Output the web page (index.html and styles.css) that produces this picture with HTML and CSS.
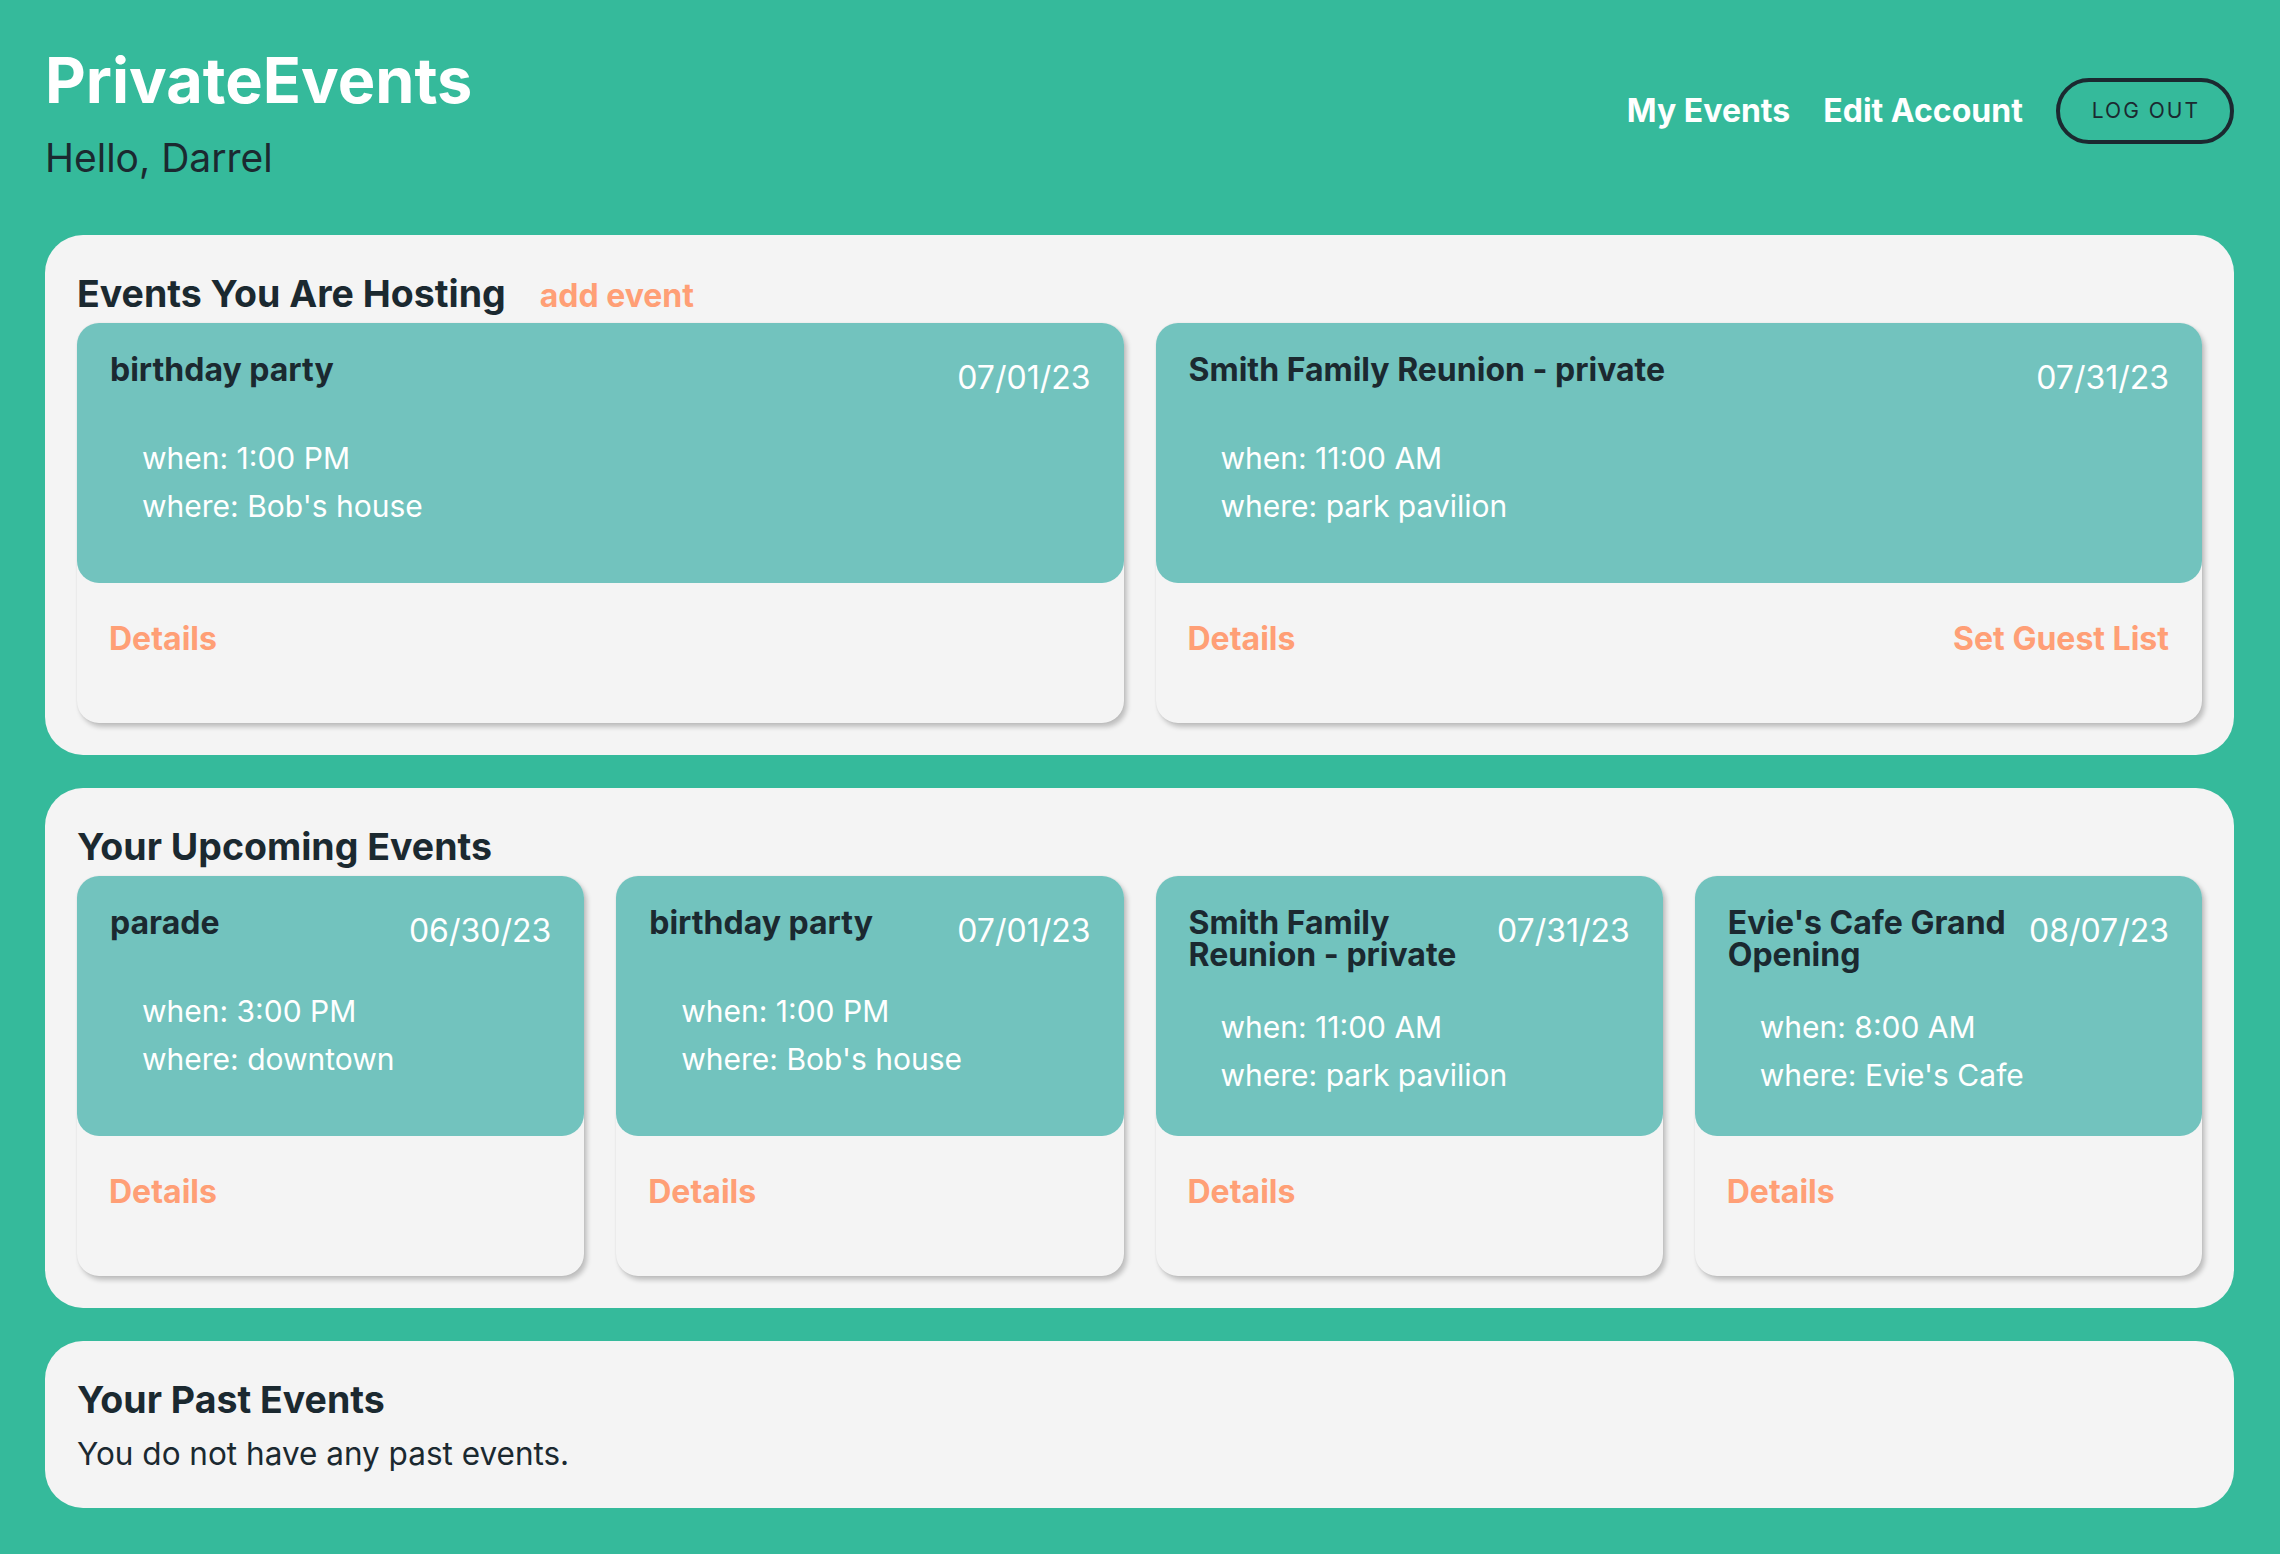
FILE: index.html
```html
<!DOCTYPE html>
<html lang="en">
<head>
<meta charset="utf-8">
<title>PrivateEvents</title>
<link rel="stylesheet" href="styles.css">
</head>
<body>
<header class="site-header">
  <div class="brand">
    <h1 class="brand-title">PrivateEvents</h1>
    <p class="greeting">Hello, Darrel</p>
  </div>
  <nav class="nav">
    <a class="nav-link" href="#">My Events</a>
    <a class="nav-link" href="#">Edit Account</a>
    <button class="logout" type="button">LOG OUT</button>
  </nav>
</header>

<main class="content">
  <section class="panel">
    <div class="panel-head">
      <h2 class="panel-title">Events You Are Hosting</h2>
      <a class="add-link" href="#">add event</a>
    </div>
    <div class="card-grid cols-2">
      <article class="card">
        <div class="card-top">
          <div class="card-head">
            <h3 class="card-title">birthday party</h3>
            <span class="card-date">07/01/23</span>
          </div>
          <ul class="card-info">
            <li>when: 1:00 PM</li>
            <li>where: Bob's house</li>
          </ul>
        </div>
        <div class="card-actions">
          <a class="action-link" href="#">Details</a>
        </div>
      </article>
      <article class="card">
        <div class="card-top">
          <div class="card-head">
            <h3 class="card-title">Smith Family Reunion - private</h3>
            <span class="card-date">07/31/23</span>
          </div>
          <ul class="card-info">
            <li>when: 11:00 AM</li>
            <li>where: park pavilion</li>
          </ul>
        </div>
        <div class="card-actions">
          <a class="action-link" href="#">Details</a>
          <a class="action-link" href="#">Set Guest List</a>
        </div>
      </article>
    </div>
  </section>

  <section class="panel">
    <div class="panel-head">
      <h2 class="panel-title">Your Upcoming Events</h2>
    </div>
    <div class="card-grid cols-4">
      <article class="card">
        <div class="card-top">
          <div class="card-head">
            <h3 class="card-title">parade</h3>
            <span class="card-date">06/30/23</span>
          </div>
          <ul class="card-info">
            <li>when: 3:00 PM</li>
            <li>where: downtown</li>
          </ul>
        </div>
        <div class="card-actions">
          <a class="action-link" href="#">Details</a>
        </div>
      </article>
      <article class="card">
        <div class="card-top">
          <div class="card-head">
            <h3 class="card-title">birthday party</h3>
            <span class="card-date">07/01/23</span>
          </div>
          <ul class="card-info">
            <li>when: 1:00 PM</li>
            <li>where: Bob's house</li>
          </ul>
        </div>
        <div class="card-actions">
          <a class="action-link" href="#">Details</a>
        </div>
      </article>
      <article class="card">
        <div class="card-top">
          <div class="card-head">
            <h3 class="card-title">Smith Family Reunion - private</h3>
            <span class="card-date">07/31/23</span>
          </div>
          <ul class="card-info">
            <li>when: 11:00 AM</li>
            <li>where: park pavilion</li>
          </ul>
        </div>
        <div class="card-actions">
          <a class="action-link" href="#">Details</a>
        </div>
      </article>
      <article class="card">
        <div class="card-top">
          <div class="card-head">
            <h3 class="card-title">Evie's Cafe Grand Opening</h3>
            <span class="card-date">08/07/23</span>
          </div>
          <ul class="card-info">
            <li>when: 8:00 AM</li>
            <li>where: Evie's Cafe</li>
          </ul>
        </div>
        <div class="card-actions">
          <a class="action-link" href="#">Details</a>
        </div>
      </article>
    </div>
  </section>

  <section class="panel panel-past">
    <div class="panel-head">
      <h2 class="panel-title">Your Past Events</h2>
    </div>
    <p class="empty-text">You do not have any past events.</p>
  </section>
</main>
</body>
</html>
```

FILE: styles.css
```css
* {
  box-sizing: border-box;
}

html, body {
  margin: 0;
}

body {
  background: #35ba9b;
  color: #1b2930;
  font-family: "Inter", "Noto Sans", sans-serif;
  padding: 45px 46px 47px 45px;
}

a {
  text-decoration: none;
}

/* Header */
.site-header {
  display: flex;
  justify-content: space-between;
  align-items: center;
  margin-bottom: 54px;
}

.brand-title {
  margin: 0;
  font-size: 63px;
  line-height: 70px;
  font-weight: 700;
  color: #ffffff;
}

.greeting {
  margin: 20px 0 0;
  font-size: 39px;
  line-height: 46px;
  font-weight: 400;
  color: #1b2930;
}

.nav {
  display: flex;
  align-items: center;
  gap: 33px;
  margin-top: -5px;
}

.nav-link {
  color: #ffffff;
  font-size: 32px;
  line-height: 40px;
  font-weight: 700;
}

.logout {
  height: 66px;
  padding: 0 30px 0 32px;
  border: 4px solid #1b2930;
  border-radius: 33px;
  background: transparent;
  color: #1b2930;
  font-family: "Inter", "Noto Sans", sans-serif;
  font-size: 21px;
  font-weight: 400;
  letter-spacing: 2px;
  display: flex;
  align-items: center;
}

/* Panels */
.content {
  display: flex;
  flex-direction: column;
  gap: 33px;
}

.panel {
  background: #f4f4f4;
  border-radius: 38px;
  padding: 37px 32px 32px 32px;
}

.panel-head {
  display: flex;
  align-items: baseline;
  gap: 34px;
  margin-bottom: 7px;
}

.panel-title {
  margin: 0;
  font-size: 37.5px;
  line-height: 44px;
  font-weight: 700;
  color: #1b2930;
}

.add-link {
  color: #ff9f76;
  font-size: 32px;
  font-weight: 700;
}

.panel-past {
  padding-bottom: 34px;
}

.empty-text {
  margin: 12px 0 0;
  font-size: 31.5px;
  line-height: 40px;
  color: #1b2930;
}

/* Cards */
.card-grid {
  display: grid;
  gap: 32px;
}

.cols-2 {
  grid-template-columns: repeat(2, 1fr);
}

.cols-4 {
  grid-template-columns: repeat(4, 1fr);
}

.card {
  background: #f4f4f4;
  border-radius: 22px;
  box-shadow: 3px 4px 5px rgba(0, 0, 0, 0.22), 0 0 2px rgba(0, 0, 0, 0.08);
  display: flex;
  flex-direction: column;
}

.card-top {
  background: #72c3be;
  border-radius: 22px;
  height: 260px;
  padding: 31px 33px 0 33px;
}

.card-head {
  display: flex;
  justify-content: space-between;
  align-items: flex-start;
  gap: 20px;
}

.card-title {
  margin: 0;
  flex: 1;
  min-width: 0;
  font-size: 32px;
  line-height: 32px;
  font-weight: 700;
  color: #1b2930;
}

.card-date {
  flex-shrink: 0;
  font-size: 32px;
  line-height: 48px;
  color: #ffffff;
}

.card-info {
  list-style: none;
  margin: 32px 0 0;
  padding: 0 0 0 32px;
}

.card-info li {
  font-size: 30px;
  line-height: 48px;
  color: #ffffff;
}

.card-actions {
  height: 140px;
  padding: 36px 33px 0 32px;
  display: flex;
  justify-content: space-between;
  align-items: flex-start;
}

.action-link {
  color: #ff9f76;
  font-size: 32px;
  line-height: 40px;
  font-weight: 700;
}
```
